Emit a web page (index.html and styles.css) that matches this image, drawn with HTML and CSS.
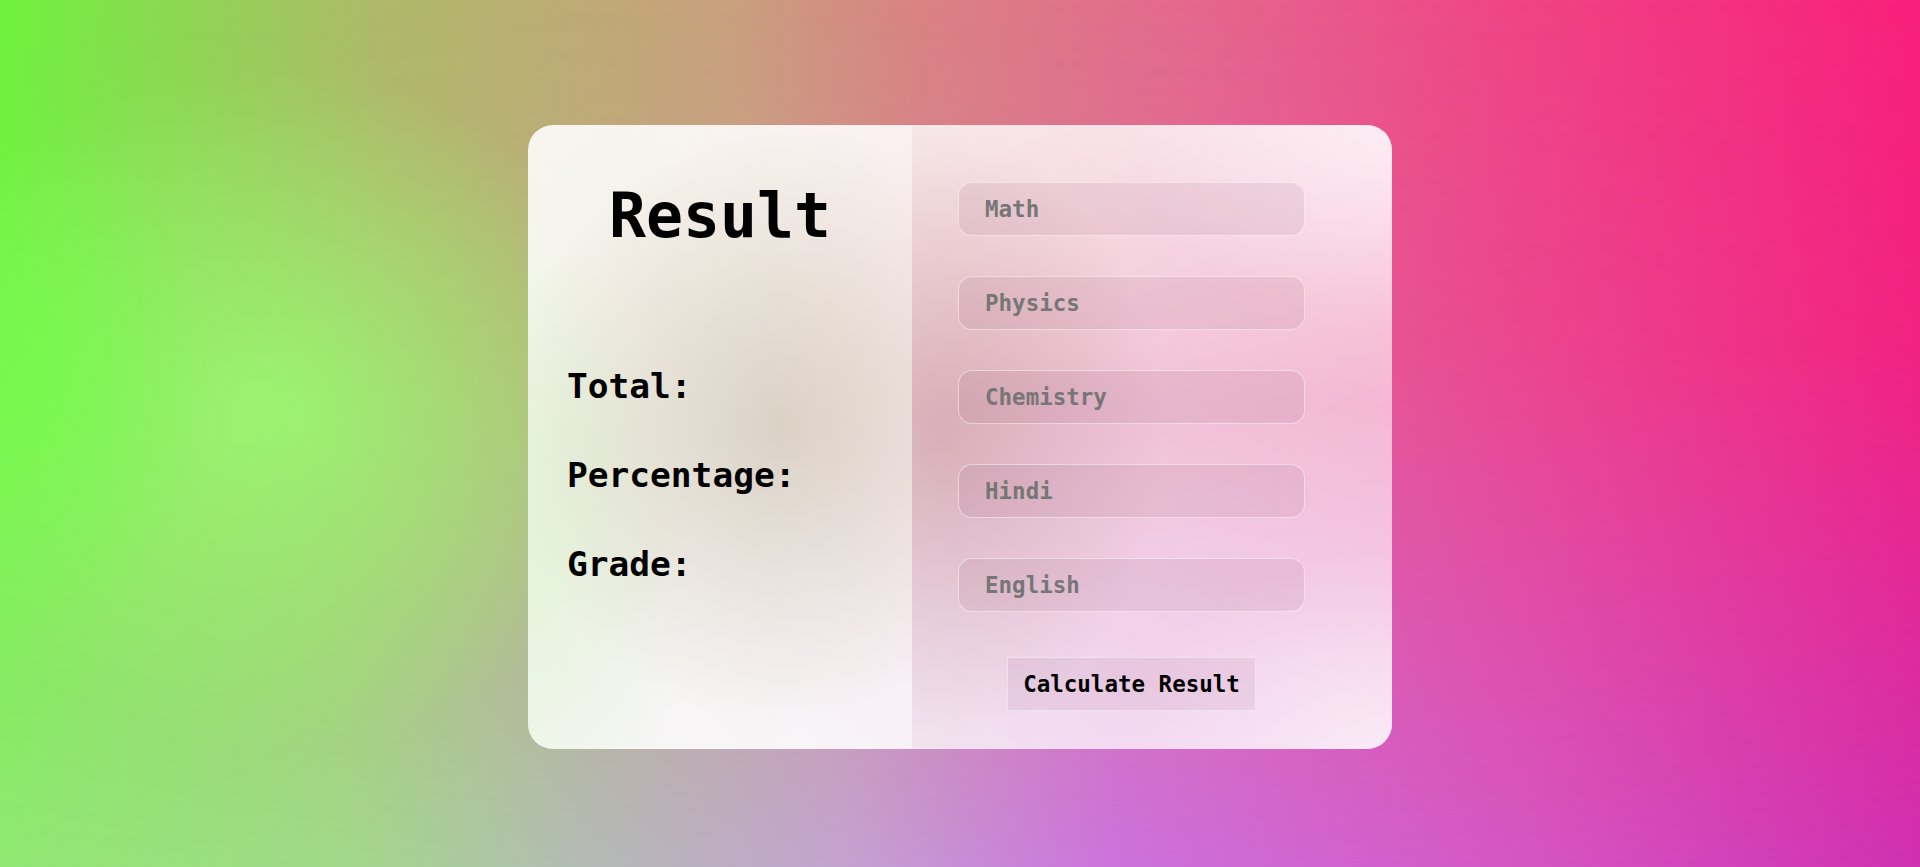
FILE: index.html
```html
<!DOCTYPE html>
<html lang="en">
<head>
<meta charset="UTF-8">
<title>Result</title>
<link rel="stylesheet" href="styles.css">
</head>
<body>
<main class="card">
  <section class="summary">
    <h1 class="title">Result</h1>
    <div class="stats">
      <p class="stat">Total:</p>
      <p class="stat">Percentage:</p>
      <p class="stat">Grade:</p>
    </div>
  </section>
  <section class="form-side">
    <form class="marks">
      <input class="mark" type="text" placeholder="Math">
      <input class="mark" type="text" placeholder="Physics">
      <input class="mark" type="text" placeholder="Chemistry">
      <input class="mark" type="text" placeholder="Hindi">
      <input class="mark" type="text" placeholder="English">
      <button class="calc" type="button">Calculate Result</button>
    </form>
  </section>
</main>
</body>
</html>
```

FILE: styles.css
```css
* { box-sizing: border-box; }

html {
  height: 100%;
  background: linear-gradient(to right, #6ff23e 0%, #b0b86a 20%, #c9a07e 38%, #d98283 48%, #e4688e 62%, #ef4686 78%, #f8207a 100%);
}

body {
  margin: 0;
  min-height: 100vh;
  position: relative;
  display: flex;
  justify-content: center;
  align-items: center;
  padding-top: 7px;
  font-family: "DejaVu Sans Mono", "Liberation Mono", monospace;
}

body::before {
  content: "";
  position: absolute;
  inset: 0;
  background: linear-gradient(to right, #90e872 0%, #a2d88a 18%, #b3bbb4 30%, #c4a2d0 44%, #cc72dc 58%, #d455c2 80%, #d030b0 100%);
  -webkit-mask-image: linear-gradient(to bottom, transparent 0%, rgba(0,0,0,0.15) 40%, #000 100%);
  mask-image: linear-gradient(to bottom, transparent 0%, rgba(0,0,0,0.15) 40%, #000 100%);
}

body::after {
  content: "";
  position: absolute;
  inset: 0;
  background:
    radial-gradient(ellipse 170px 260px at 40px 380px, rgba(110, 255, 70, 0.6), rgba(110, 255, 70, 0) 100%),
    radial-gradient(ellipse 400px 340px at 270px 410px, rgba(155, 250, 115, 0.85), rgba(155, 250, 115, 0) 100%);
}

.card {
  position: relative;
  z-index: 1;
  width: 864px;
  height: 624px;
  display: flex;
  border-radius: 25px;
  overflow: hidden;
}

.summary {
  width: 384px;
  padding: 61px 0 0 39px;
  background:
    radial-gradient(ellipse 280px 300px at 66% 48%, rgba(140, 125, 80, 0.26), rgba(140, 125, 80, 0) 100%),
    radial-gradient(ellipse 160px 320px at 0% 70%, rgba(200, 240, 180, 0.35), rgba(200, 240, 180, 0) 100%),
    linear-gradient(to bottom, rgba(255, 255, 255, 0.88), rgba(255, 255, 255, 0.84) 50%, rgba(255, 255, 255, 0.88));
}

.title {
  margin: 0;
  padding-right: 39px;
  text-align: center;
  font-size: 61.5px;
  line-height: 61px;
  font-weight: bold;
  color: #000;
}

.stats {
  margin-top: 95px;
}

.stat {
  margin: 0;
  font-size: 34.5px;
  line-height: 89px;
  font-weight: bold;
  color: #000;
}

.form-side {
  width: 480px;
  padding: 57px 0 0 46px;
  background:
    radial-gradient(ellipse 220px 300px at 6% 50%, rgba(140, 70, 80, 0.22), rgba(140, 70, 80, 0) 100%),
    radial-gradient(ellipse 260px 200px at 100% 0%, rgba(255, 255, 255, 0.5), rgba(255, 255, 255, 0) 100%),
    radial-gradient(ellipse 260px 200px at 100% 100%, rgba(255, 255, 255, 0.5), rgba(255, 255, 255, 0) 100%),
    linear-gradient(to bottom, rgba(255,255,255,0.8) 0%, rgba(255,255,255,0.58) 45%, rgba(255,255,255,0.74) 100%);
}

.marks {
  width: 347px;
  display: flex;
  flex-direction: column;
  align-items: center;
  gap: 40px;
}

.mark {
  width: 347px;
  height: 54px;
  padding: 0 26px;
  border: 1px solid rgba(255, 255, 255, 0.5);
  border-radius: 14px;
  background: rgba(150, 80, 110, 0.11);
  font-family: inherit;
  font-size: 22.5px;
  font-weight: bold;
  color: #000;
  outline: none;
}

.mark::placeholder {
  color: #767676;
  opacity: 1;
}

.calc {
  margin-top: 5px;
  width: 249px;
  height: 54px;
  padding: 0 15px;
  border: 1px solid rgba(255, 255, 255, 0.45);
  border-radius: 0;
  background: rgba(150, 90, 130, 0.1);
  font-family: inherit;
  font-size: 22.5px;
  font-weight: bold;
  color: #000;
  white-space: nowrap;
}
```
